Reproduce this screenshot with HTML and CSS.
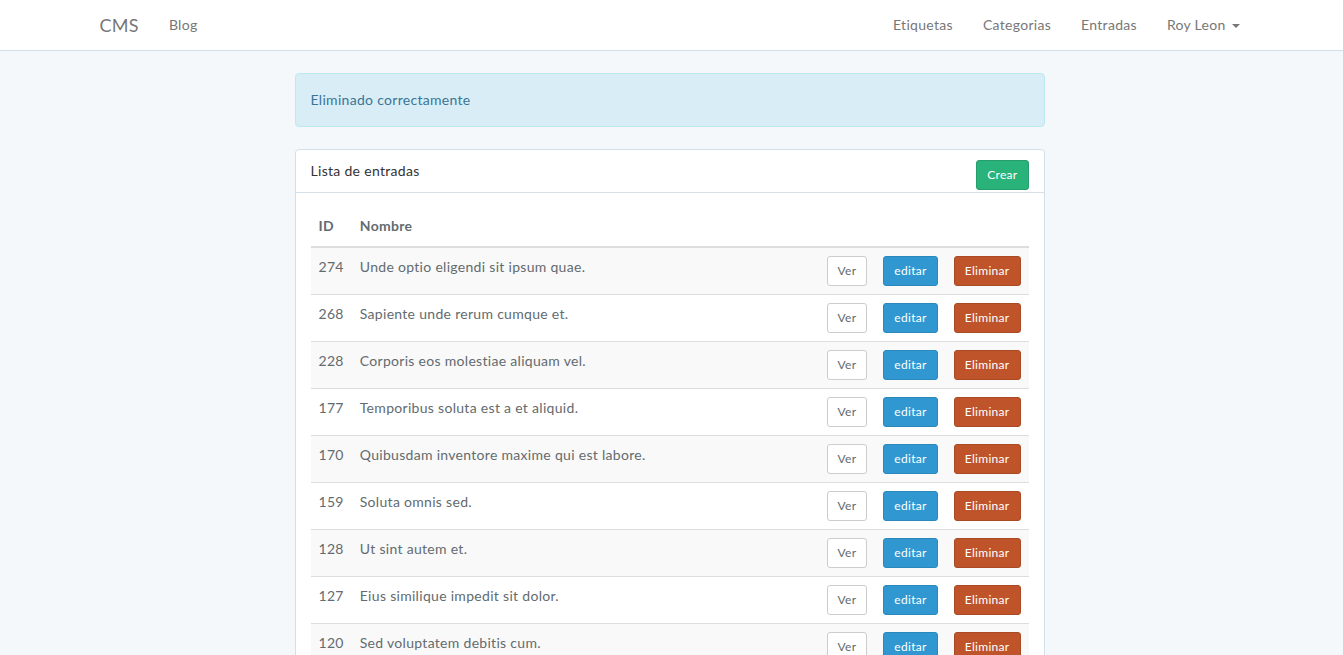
FILE: index.html
```html
<!DOCTYPE html>
<html lang="es">
<head>
<meta charset="utf-8">
<title>CMS</title>
<link rel="stylesheet" href="styles.css">
</head>
<body>
<nav class="navbar">
  <div class="container nav-inner">
    <div class="nav-left">
      <a class="brand" href="#">CMS</a>
      <ul class="nav">
        <li><a href="#">Blog</a></li>
      </ul>
    </div>
    <ul class="nav">
      <li><a href="#">Etiquetas</a></li>
      <li><a href="#">Categorias</a></li>
      <li><a href="#">Entradas</a></li>
      <li><a href="#">Roy Leon <span class="caret"></span></a></li>
    </ul>
  </div>
</nav>
<main class="container">
  <div class="col">
    <div class="alert">Eliminado correctamente</div>
    <div class="panel">
      <div class="panel-heading">
        Lista de entradas
        <a href="#" class="btn btn-sm btn-success pull-right">Crear</a>
      </div>
      <div class="panel-body">
        <table class="table">
          <thead>
            <tr><th class="c-id">ID</th><th>Nombre</th><th colspan="3">&nbsp;</th></tr>
          </thead>
          <tbody>
            <tr><td>274</td><td>Unde optio eligendi sit ipsum quae.</td><td class="act"><a class="btn btn-sm btn-default">Ver</a></td><td class="act"><a class="btn btn-sm btn-primary">editar</a></td><td class="act"><a class="btn btn-sm btn-danger">Eliminar</a></td></tr>
            <tr><td>268</td><td>Sapiente unde rerum cumque et.</td><td class="act"><a class="btn btn-sm btn-default">Ver</a></td><td class="act"><a class="btn btn-sm btn-primary">editar</a></td><td class="act"><a class="btn btn-sm btn-danger">Eliminar</a></td></tr>
            <tr><td>228</td><td>Corporis eos molestiae aliquam vel.</td><td class="act"><a class="btn btn-sm btn-default">Ver</a></td><td class="act"><a class="btn btn-sm btn-primary">editar</a></td><td class="act"><a class="btn btn-sm btn-danger">Eliminar</a></td></tr>
            <tr><td>177</td><td>Temporibus soluta est a et aliquid.</td><td class="act"><a class="btn btn-sm btn-default">Ver</a></td><td class="act"><a class="btn btn-sm btn-primary">editar</a></td><td class="act"><a class="btn btn-sm btn-danger">Eliminar</a></td></tr>
            <tr><td>170</td><td>Quibusdam inventore maxime qui est labore.</td><td class="act"><a class="btn btn-sm btn-default">Ver</a></td><td class="act"><a class="btn btn-sm btn-primary">editar</a></td><td class="act"><a class="btn btn-sm btn-danger">Eliminar</a></td></tr>
            <tr><td>159</td><td>Soluta omnis sed.</td><td class="act"><a class="btn btn-sm btn-default">Ver</a></td><td class="act"><a class="btn btn-sm btn-primary">editar</a></td><td class="act"><a class="btn btn-sm btn-danger">Eliminar</a></td></tr>
            <tr><td>128</td><td>Ut sint autem et.</td><td class="act"><a class="btn btn-sm btn-default">Ver</a></td><td class="act"><a class="btn btn-sm btn-primary">editar</a></td><td class="act"><a class="btn btn-sm btn-danger">Eliminar</a></td></tr>
            <tr><td>127</td><td>Eius similique impedit sit dolor.</td><td class="act"><a class="btn btn-sm btn-default">Ver</a></td><td class="act"><a class="btn btn-sm btn-primary">editar</a></td><td class="act"><a class="btn btn-sm btn-danger">Eliminar</a></td></tr>
            <tr><td>120</td><td>Sed voluptatem debitis cum.</td><td class="act"><a class="btn btn-sm btn-default">Ver</a></td><td class="act"><a class="btn btn-sm btn-primary">editar</a></td><td class="act"><a class="btn btn-sm btn-danger">Eliminar</a></td></tr>
            <tr><td>112</td><td>Aut eum quia et.</td><td class="act"><a class="btn btn-sm btn-default">Ver</a></td><td class="act"><a class="btn btn-sm btn-primary">editar</a></td><td class="act"><a class="btn btn-sm btn-danger">Eliminar</a></td></tr>
          </tbody>
        </table>
      </div>
    </div>
  </div>
</main>
</body>
</html>
```
FILE: styles.css
```css
* { box-sizing: border-box; }
html, body { margin: 0; }
body {
  background: #f5f8fa;
  font-family: Lato, "Open Sans", "Liberation Sans", sans-serif;
  font-size: 14px;
  line-height: 1.6;
  letter-spacing: 0.3px;
  color: #636b6f;
  padding-right: 4px;
}
a { text-decoration: none; }
.container {
  width: 1170px;
  margin: 0 auto;
  padding: 0 15px;
}
.navbar {
  background: #fff;
  border-bottom: 1px solid #d3e0e9;
  min-height: 51px;
  margin-bottom: 22px;
  margin-right: -4px;
  padding-right: 4px;
}
.nav-inner {
  display: flex;
  justify-content: space-between;
  align-items: flex-start;
}
.nav-left { display: flex; margin-left: -15px; }
.brand {
  display: block;
  height: 50px;
  padding: 14px 15px;
  font-size: 18px;
  line-height: 22px;
  color: #777;
}
.nav {
  display: flex;
  list-style: none;
  margin: 0;
  padding: 0;
}
.nav-inner > .nav { margin-right: -15px; }
.nav a {
  display: block;
  padding: 15px;
  line-height: 20px;
  color: #777;
}
.caret {
  display: inline-block;
  width: 0;
  height: 0;
  margin-left: 2px;
  vertical-align: middle;
  border-top: 4px solid #777;
  border-left: 4px solid transparent;
  border-right: 4px solid transparent;
}
.col {
  width: 750px;
  margin-left: 195px;
}
.alert {
  padding: 15px;
  margin-bottom: 22px;
  border: 1px solid #bce8f1;
  border-radius: 4px;
  background: #d9edf7;
  color: #3a7596;
}
.panel {
  background: #fff;
  border: 1px solid #d3e0e9;
  border-radius: 4px;
  margin-bottom: 22px;
}
.panel-heading {
  padding: 10px 15px;
  height: 43px;
  border-bottom: 1px solid #d3e0e9;
  color: #333;
}
.pull-right { float: right; }
.panel-body { padding: 14px 15px 15px; }
.btn {
  display: inline-block;
  border: 1px solid transparent;
  border-radius: 3px;
  white-space: nowrap;
  cursor: pointer;
}
.btn-sm {
  padding: 5px 10px;
  font-size: 12px;
  line-height: 1.5;
}
.btn-success { background: #2ab27b; border-color: #259d6d; color: #fff; }
.btn-primary { background: #3097d1; border-color: #2a88bd; color: #fff; }
.btn-danger { background: #bf5329; border-color: #aa4a24; color: #fff; }
.btn-default { background: #fff; border-color: #ccc; color: #636b6f; }
.table {
  width: 100%;
  border-collapse: collapse;
  border-spacing: 0;
}
.table th {
  text-align: left;
  font-weight: bold;
  padding: 8px;
  line-height: 1.6;
  vertical-align: bottom;
  border-bottom: 2px solid #ddd;
}
.c-id { width: 10px; }
.table td {
  padding: 8px;
  line-height: 1.6;
  vertical-align: top;
  border-top: 1px solid #ddd;
}
.table tbody tr:first-child td { border-top: 0; }
.table tbody tr:nth-child(odd) { background: #f9f9f9; }
.table td.act { width: 10px; }
```
